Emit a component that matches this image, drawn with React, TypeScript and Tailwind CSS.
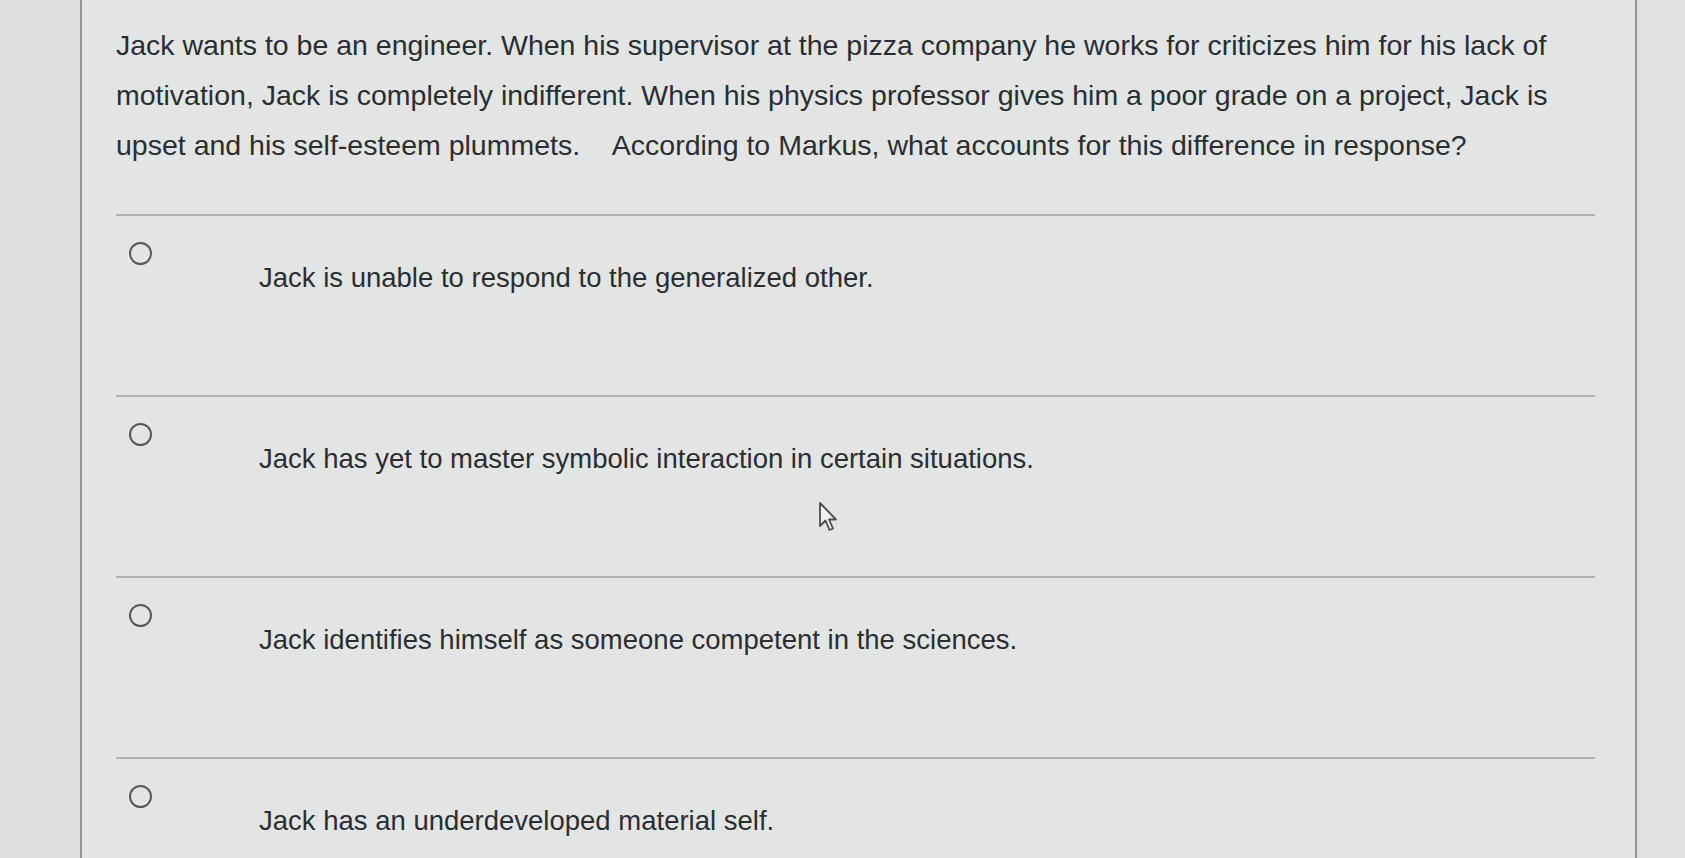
import React from "react";

const options = [
  "Jack is unable to respond to the generalized other.",
  "Jack has yet to master symbolic interaction in certain situations.",
  "Jack identifies himself as someone competent in the sciences.",
  "Jack has an underdeveloped material self.",
];

const Cursor = () => (
  <svg
    className="absolute left-[818px] top-[501px]"
    width="20"
    height="32"
    viewBox="0 0 20 32"
    fill="none"
  >
    <path
      d="M2 2 L2 25 L7.5 19.5 L11.5 29 L15 27.5 L11 18.5 L18 18.5 Z"
      fill="#eef0f0"
      stroke="#4a4d4f"
      strokeWidth="1.8"
      strokeLinejoin="round"
    />
  </svg>
);

export default function App() {
  return (
    <div
      className="relative flex h-[858px] w-full overflow-hidden bg-[#dde0df] text-[#2b2e30]"
      style={{ fontFamily: '"Liberation Sans", Arial, sans-serif' }}
    >
      <div className="w-[80px] shrink-0" />

      <main className="flex-1 border-x-2 border-[#8e9395] bg-[#e2e5e4] pl-[34px] pr-[40px]">
        <p className="max-w-[1462px] pt-[20px] text-[28.5px] leading-[50px]">
          Jack wants to be an engineer. When his supervisor at the pizza company he works for
          criticizes him for his lack of motivation, Jack is completely indifferent. When his
          physics professor gives him a poor grade on a project, Jack is upset and his self-esteem
          plummets.&nbsp;&nbsp;&nbsp;&nbsp;According to Markus, what accounts for this difference
          in response?
        </p>

        <div className="mt-[44px]">
          {options.map((text) => (
            <div key={text} className="h-[181px] border-t-2 border-[#aeb2b3]">
              <label className="flex items-start">
                <span className="ml-[13px] mt-[26px] h-[23px] w-[23px] shrink-0 rounded-full border-[2.5px] border-[#55595b]" />
                <span className="ml-[107px] mt-[46px] text-[27.5px] leading-[32px]">{text}</span>
              </label>
            </div>
          ))}
        </div>
      </main>

      <div className="w-[48px] shrink-0 bg-[#e0e3e2]" />

      <Cursor />
    </div>
  );
}
